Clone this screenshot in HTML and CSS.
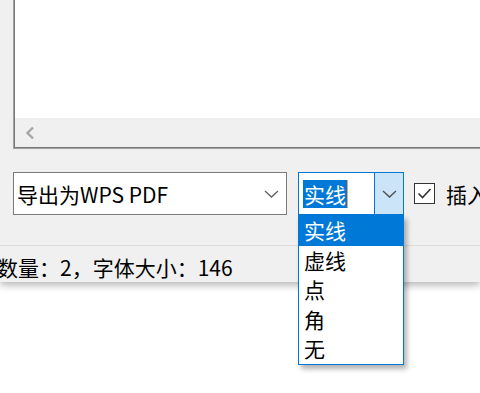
FILE: index.html
```html
<!DOCTYPE html>
<html lang="zh-CN">

<head>
    <meta charset="UTF-8">
    <meta name="viewport" content="width=device-width, initial-scale=1.0">
    <title>导出</title>
    <link rel="stylesheet" href="styles.css">
</head>

<body>
    <div class="window">
        <div class="listbox">
            <div class="list-area"></div>
            <div class="hscroll">
                <svg class="scroll-arrow" width="12" height="14" viewBox="0 0 12 14">
                    <path d="M9 1.5 L3.5 7 L9 12.5" fill="none" stroke="#a6a6a6" stroke-width="2.4" />
                </svg>
            </div>
        </div>

        <div class="toolbar">
            <div class="combo combo-export">
                <span class="combo-text">导出为WPS PDF</span>
                <svg class="chevron" width="15" height="8" viewBox="0 0 15 8">
                    <path d="M1 1 L7.5 7 L14 1" fill="none" stroke="#606060" stroke-width="1.3" />
                </svg>
            </div>

            <div class="combo combo-line">
                <span class="combo-edit">
                    <span class="combo-selected">实线</span><span class="caret"></span>
                </span>
                <span class="combo-button">
                    <svg class="chevron" width="15" height="8" viewBox="0 0 15 8">
                        <path d="M1 1 L7.5 7 L14 1" fill="none" stroke="#4d4d4d" stroke-width="1.3" />
                    </svg>
                </span>
                <ul class="combo-list">
                    <li class="combo-item active">实线</li>
                    <li class="combo-item">虚线</li>
                    <li class="combo-item">点</li>
                    <li class="combo-item">角</li>
                    <li class="combo-item">无</li>
                </ul>
            </div>

            <label class="check">
                <span class="check-box">
                    <svg width="19" height="19" viewBox="0 0 19 19">
                        <path d="M3.5 9.5 L7.5 13.5 L15.5 5" fill="none" stroke="#333" stroke-width="1.6" />
                    </svg>
                </span>
                <span class="check-label">插入</span>
            </label>
        </div>

        <div class="statusbar">数量：2，字体大小：146</div>
    </div>
</body>

</html>
```

FILE: styles.css
```css
body {
    margin: 0;
    width: 480px;
    height: 393px;
    overflow: hidden;
    background: #ffffff;
    font-family: "Noto Sans CJK SC", "Noto Sans", sans-serif;
    font-size: 21px;
    color: #000;
}

.window {
    background: #f0f0f0;
    box-shadow: 0 3px 8px rgba(0, 0, 0, 0.3);
}

/* list with horizontal scroll bar */

.listbox {
    margin-left: 13px;
    width: 600px;
    height: 149px;
    box-sizing: border-box;
    border-left: 1px solid #a0a0a0;
    border-bottom: 1px solid #a0a0a0;
    box-shadow: inset 1px -1px 0 #7a7a7a;
    display: flex;
    flex-direction: column;
}

.list-area {
    height: 118px;
    margin-left: 1px;
    background: #ffffff;
}

.hscroll {
    flex: 1;
    margin-left: 1px;
    margin-bottom: 1px;
    background: #f0f0f0;
    display: flex;
    align-items: center;
    padding-left: 9px;
}

/* toolbar */

.toolbar {
    margin-top: 23px;
    margin-left: 13px;
    height: 43px;
    display: flex;
    align-items: center;
    white-space: nowrap;
}

.toolbar > * {
    flex-shrink: 0;
}

.combo {
    height: 43px;
    box-sizing: border-box;
    background: #ffffff;
    display: flex;
    align-items: center;
}

.combo-export {
    width: 274px;
    border: 1px solid #7a7a7a;
    padding: 0 7px 0 3px;
    justify-content: space-between;
}

.combo-text {
    line-height: 28px;
}

.combo-line {
    position: relative;
    width: 106px;
    margin-left: 11px;
    border: 1px solid #0078d7;
}

.combo-edit {
    flex: 1;
    height: 100%;
    display: flex;
    align-items: center;
    padding-left: 4px;
}

.combo-selected {
    background: #0078d7;
    color: #ffffff;
    line-height: 28px;
    padding: 0 1px;
}

.caret {
    width: 1px;
    height: 28px;
    background: #f5a25d;
}

.combo-button {
    width: 28px;
    height: 100%;
    border-left: 1px solid #0078d7;
    background: #cce4f7;
    display: flex;
    align-items: center;
    justify-content: center;
}

.combo-list {
    position: absolute;
    left: -1px;
    top: calc(100% + 1px);
    width: 106px;
    box-sizing: border-box;
    margin: 0;
    padding: 0;
    list-style: none;
    background: #ffffff;
    border: 1px solid #0078d7;
    box-shadow: 3px 4px 5px rgba(0, 0, 0, 0.3);
}

.combo-item {
    height: 29.6px;
    line-height: 29.6px;
    padding-left: 5px;
}

.combo-item.active {
    background: #0078d7;
    color: #ffffff;
}

.check {
    display: flex;
    align-items: center;
    margin-left: 10px;
}

.check-box {
    width: 21px;
    height: 21px;
    box-sizing: border-box;
    border: 1px solid #333333;
    background: #ffffff;
    display: flex;
}

.check-label {
    margin-left: 11px;
}

/* status bar */

.statusbar {
    margin-top: 30px;
    border-top: 1px solid #dcdcdc;
    height: 37px;
    box-sizing: border-box;
    padding-top: 7px;
    line-height: 28px;
    margin-left: -3px;
    white-space: nowrap;
}
```
